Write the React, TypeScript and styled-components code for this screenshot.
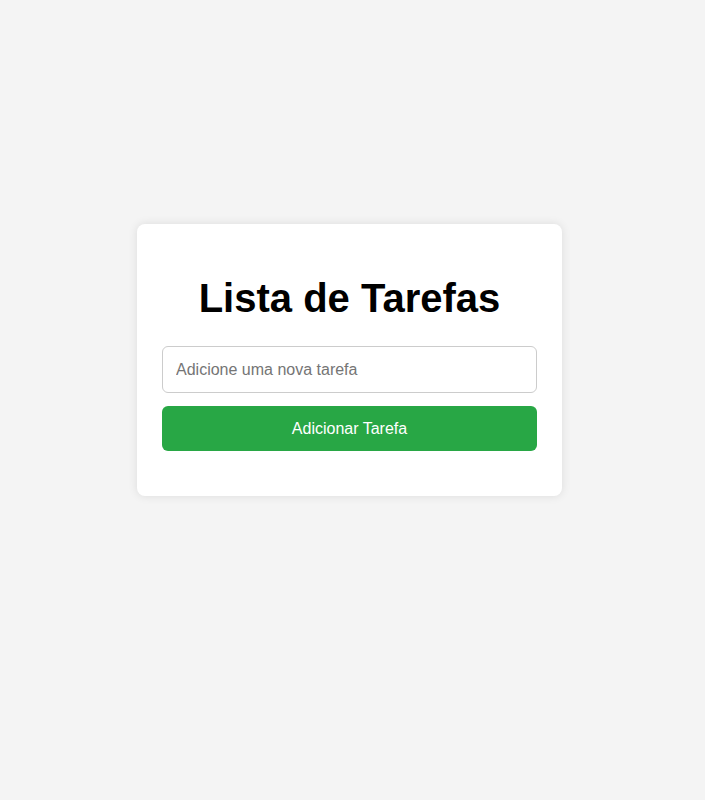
import React from "react";
import styled, { createGlobalStyle } from "styled-components";

const GlobalStyle = createGlobalStyle`
  html, body {
    margin: 0;
    padding: 0;
    background: #f4f4f4;
    font-family: "Liberation Sans", Arial, sans-serif;
  }
`;

const Page = styled.div`
  min-height: 800px;
  display: flex;
  justify-content: center;
  align-items: flex-start;
  padding: 224px 6px 0 0;
  box-sizing: border-box;
`;

const Card = styled.div`
  width: 425px;
  box-sizing: border-box;
  background: #ffffff;
  border-radius: 8px;
  box-shadow: 0 0 10px rgba(0, 0, 0, 0.1);
  padding: 20px 25px 45px;
  display: flex;
  flex-direction: column;
`;

const Title = styled.h1`
  margin: 31px 0 25px;
  font-size: 40px;
  line-height: 46px;
  font-weight: bold;
  text-align: center;
  color: #000;
`;

const Input = styled.input`
  height: 47px;
  box-sizing: border-box;
  border: 1px solid #cccccc;
  border-radius: 6px;
  padding: 0 13px;
  font-size: 16px;
  font-family: "Liberation Sans", Arial, sans-serif;
  color: #333;
  outline: none;
  &::placeholder {
    color: #757575;
  }
`;

const Button = styled.button`
  margin-top: 13px;
  height: 45px;
  border: none;
  border-radius: 6px;
  background: #28a745;
  color: #ffffff;
  font-size: 16px;
  font-family: "Liberation Sans", Arial, sans-serif;
  cursor: pointer;
`;

export default function App() {
  return (
    <>
      <GlobalStyle />
      <Page>
        <Card>
          <Title>Lista de Tarefas</Title>
          <Input placeholder="Adicione uma nova tarefa" />
          <Button>Adicionar Tarefa</Button>
        </Card>
      </Page>
    </>
  );
}
